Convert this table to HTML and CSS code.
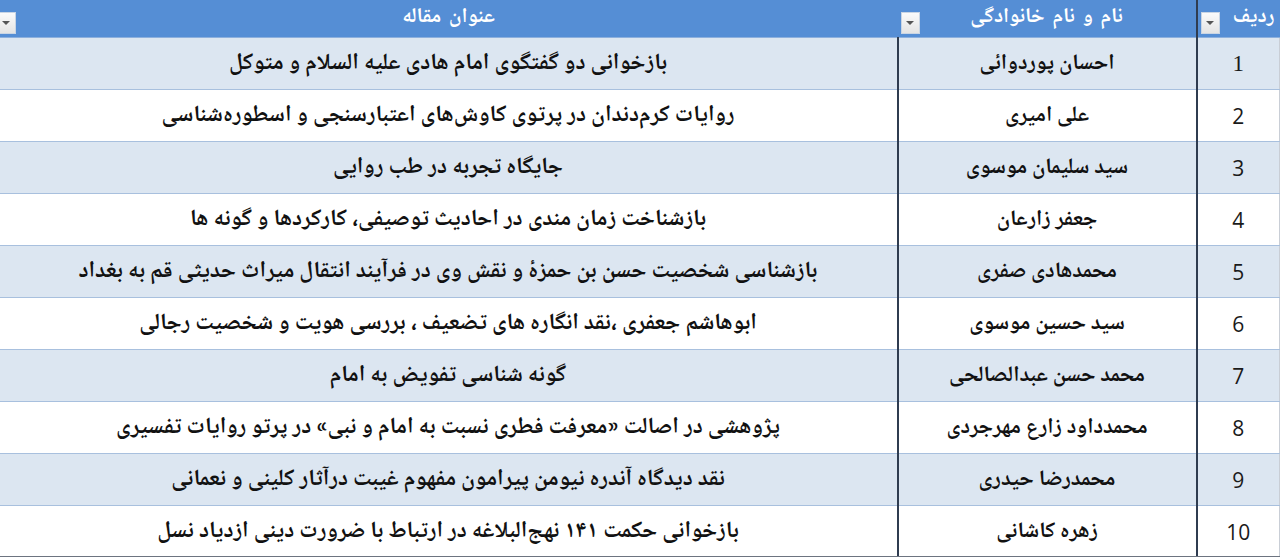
FILE: index.html
```html
<!DOCTYPE html>
<html lang="fa" dir="rtl">
<head>
<meta charset="utf-8">
<title>جدول مقالات</title>
<link rel="stylesheet" href="styles.css">
</head>
<body>
<table class="sheet">
  <colgroup>
    <col class="c-num">
    <col class="c-name">
    <col class="c-title">
  </colgroup>
  <thead>
    <tr>
      <th class="h-num"><span class="h-label">ردیف</span><span class="dd"><i></i></span></th>
      <th class="h-name"><span class="h-label">نام و نام خانوادگی</span><span class="dd"><i></i></span></th>
      <th class="h-title"><span class="h-label">عنوان مقاله</span><span class="dd"><i></i></span></th>
    </tr>
  </thead>
  <tbody>
    <tr class="odd"><td class="num serif">1</td><td class="name">احسان پوردوائی</td><td class="title">بازخوانی دو گفتگوی امام هادی علیه السلام و متوکل</td></tr>
    <tr><td class="num">2</td><td class="name">علی امیری</td><td class="title">روایات کرم‌دندان در پرتوی کاوش‌های اعتبارسنجی و اسطوره‌شناسی</td></tr>
    <tr class="odd"><td class="num">3</td><td class="name">سید سلیمان موسوی</td><td class="title">جایگاه تجربه در طب روایی</td></tr>
    <tr><td class="num">4</td><td class="name">جعفر زارعان</td><td class="title">بازشناخت زمان مندی در احادیث توصیفی، کارکردها و گونه ها</td></tr>
    <tr class="odd"><td class="num">5</td><td class="name">محمدهادی صفری</td><td class="title">بازشناسی شخصیت حسن بن حمزهٔ و نقش وی در فرآیند انتقال میراث حدیثی قم به بغداد</td></tr>
    <tr><td class="num">6</td><td class="name">سید حسین موسوی</td><td class="title">ابوهاشم جعفری ،نقد انگاره های تضعیف ، بررسی هویت و شخصیت رجالی</td></tr>
    <tr class="odd"><td class="num">7</td><td class="name">محمد حسن عبدالصالحی</td><td class="title">گونه شناسی تفویض به امام</td></tr>
    <tr><td class="num">8</td><td class="name">محمدداود زارع مهرجردی</td><td class="title">پژوهشی در اصالت «معرفت فطری نسبت به امام و نبی» در پرتو روایات تفسیری</td></tr>
    <tr class="odd"><td class="num">9</td><td class="name">محمدرضا حیدری</td><td class="title">نقد دیدگاه آندره نیومن پیرامون مفهوم غیبت درآثار کلینی و نعمانی</td></tr>
    <tr class="last"><td class="num">10</td><td class="name">زهره کاشانی</td><td class="title">بازخوانی حکمت ۱۴۱ نهج‌البلاغه در ارتباط با ضرورت دینی ازدیاد نسل</td></tr>
  </tbody>
</table>
</body>
</html>
```
FILE: styles.css
```css
html, body {
  margin: 0;
  padding: 0;
  background: #ffffff;
}
body {
  width: 1280px;
  height: 557px;
  overflow: hidden;
  font-family: "Noto Naskh Arabic", "Noto Sans Arabic", "DejaVu Sans", sans-serif;
}
.sheet {
  width: 1280px;
  border-collapse: collapse;
  table-layout: fixed;
  direction: rtl;
}
.c-num { width: 83px; }
.c-name { width: 299px; }
.c-title { width: 898px; }

thead th {
  box-sizing: border-box;
  height: 37px;
  padding: 0;
  background: #558ed5;
  color: #ffffff;
  font-weight: bold;
  font-size: 21px;
  word-spacing: 3px;
  line-height: 30px;
  vertical-align: middle;
  position: relative;
  border-bottom: 1px solid #8db0dd;
}
.h-num { text-align: right; border-left: 2px solid #2f3c50; }
.h-num .h-label { padding-right: 5px; }
.h-name, .h-title { text-align: center; }

.dd {
  position: absolute;
  left: 3px;
  top: 12px;
  width: 19px;
  height: 22px;
  box-sizing: border-box;
  background: linear-gradient(#fbfbfb, #e4e4e4);
  border: 1px solid #c9d5e4;
  display: flex;
  align-items: center;
  justify-content: center;
}
.h-title .dd { left: -3px; }
.dd i {
  width: 0;
  height: 0;
  border-left: 4px solid transparent;
  border-right: 4px solid transparent;
  border-top: 4px solid #555555;
}

tbody td {
  height: 52px;
  padding: 2px 0 0 0;
  box-sizing: border-box;
  border-bottom: 1px solid #a8c0de;
  text-align: center;
  color: #111111;
  font-weight: bold;
  font-size: 23px;
  line-height: 34px;
  white-space: nowrap;
}
tbody td.name { font-size: 22px; }
tbody tr.odd td { background: #dce6f1; }
tbody tr.last td { border-bottom: 2px solid #6d7480; }
td.num {
  font-family: "Open Sans", "Liberation Sans", sans-serif;
  font-weight: 500;
  font-size: 21px;
  color: #1a1a1a;
  border-left: 2px solid #2f3c50;
  border-right: 1px solid #c9ced6;
}
td.num.serif {
  font-family: "Liberation Serif", serif;
  font-weight: normal;
  font-size: 23px;
}
td.name { border-left: 2px solid #2f3c50; }
```
